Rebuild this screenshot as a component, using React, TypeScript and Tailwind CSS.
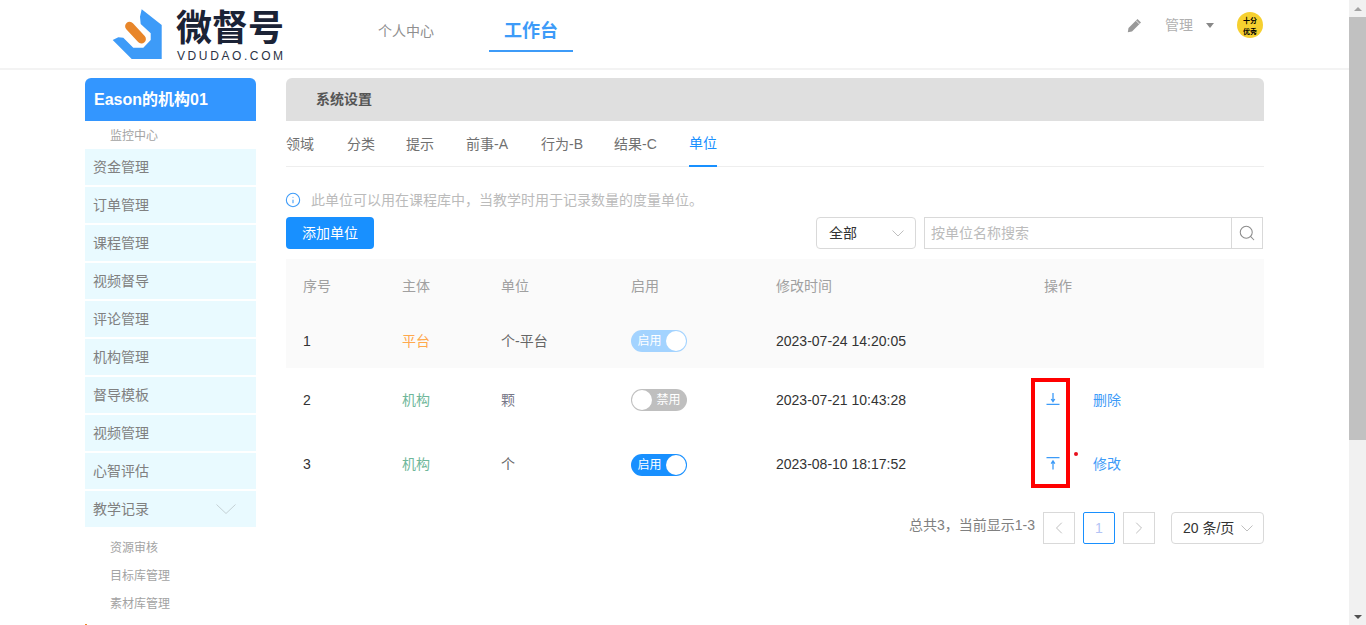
import { ChevronLeft, ChevronRight, Info, Search } from "lucide-react";

const font = { fontFamily: '"Liberation Sans", "Noto Sans CJK SC", sans-serif' };

const menu = ["资金管理", "订单管理", "课程管理", "视频督导", "评论管理", "机构管理", "督导模板", "视频管理", "心智评估"];
const subs = ["资源审核", "目标库管理", "素材库管理"];
const tabs = ["领域", "分类", "提示", "前事-A", "行为-B", "结果-C", "单位"];
const tabW = ["w-[61px]", "w-[59px]", "w-[60px]", "w-[75px]", "w-[73px]", "w-[75px]", "w-[28px]"];
const gridCols = "grid grid-cols-[99px_99px_130px_145px_268px_1fr] items-center pl-[17px]";

function Logo() {
  return (
    <svg width="52" height="52" viewBox="0 0 52 52" className="shrink-0">
      <path
        d="M29.7 1.3 L49.7 17 L49.7 51 L19.7 51 L0.7 32 L6.3 29.3 L11.3 29.7 L21.3 39.7 L31.3 39.7 L38.7 32 L38.7 25.3 L28.7 16 L28 8.7 Z"
        fill="#3d9bf8"
        strokeLinejoin="round"
      />
      <path d="M17.6 18.2 L29.4 31" stroke="#e8862a" strokeWidth="9" strokeLinecap="round" />
    </svg>
  );
}

function Down() {
  return (
    <svg width="12" height="7" viewBox="0 0 12 7" className="shrink-0">
      <path d="M0.5 0.5 L6 6 L11.5 0.5" stroke="#bfbfbf" fill="none" />
    </svg>
  );
}

function Switch({ on, label, faded, shift }: { on: boolean; label: string; faded?: boolean; shift?: boolean }) {
  const bg = on ? (faded ? "bg-[#a3d3ff]" : "bg-[#1890ff]") : "bg-[#bfbfbf]";
  return (
    <div className={`flex h-[22px] w-[56px] items-center rounded-full px-[1px] ${bg} ${on ? "flex-row" : "flex-row-reverse"} ${shift ? "mt-[2px]" : ""}`}>
      <span className={`flex-1 text-center text-[12px] leading-none text-white ${on ? "pl-[1px]" : "pr-[1px]"}`}>{label}</span>
      <span className="h-[20px] w-[20px] rounded-full bg-white" />
    </div>
  );
}

function ArrowIcon({ up }: { up?: boolean }) {
  return (
    <svg width="14" height="14" viewBox="0 0 14 14" className="block">
      {up ? (
        <path d="M0.5 0.6 H13.5 M7 4.2 V12.4 M5.2 6.6 L7 4 L8.8 6.6" stroke="#3d9bf8" strokeWidth="1.3" fill="none" />
      ) : (
        <path d="M0.5 11.4 H13.5 M7 0 V8.4 M5.2 6 L7 8.6 L8.8 6" stroke="#3d9bf8" strokeWidth="1.3" fill="none" />
      )}
    </svg>
  );
}

export default function App() {
  return (
    <div style={font} className="flex h-[625px] w-[1366px] overflow-hidden bg-white text-[14px]">
      <div className="w-[1349px] shrink-0">
        <header className="flex h-[70px] items-start border-b-2 border-[#f3f3f3]">
          <div className="ml-[112px] mt-[8px] flex w-[266px]">
            <Logo />
            <div className="ml-[13px] flex flex-col">
              <span className="ml-[-1px] mt-[0px] text-[36px] font-bold leading-[42px] text-[#1b2336]">微督号</span>
              <span className="mt-[-1px] text-[12px] leading-[14px] tracking-[2.6px] text-[#2b3245]">VDUDAO.COM</span>
            </div>
          </div>
          <span className="mt-[22px] text-[14px] leading-[18px] text-[#8f8f8f]">个人中心</span>
          <div className="ml-[55px] flex h-[52px] w-[84px] flex-col items-center border-b-2 border-[#3d9bf8] pt-[19px]">
            <span className="text-[18px] font-bold leading-[24px] text-[#3d9bf8]">工作台</span>
          </div>
          <div className="ml-auto mr-[86px] mt-[12px] flex h-[26px] items-center">
            <svg width="15" height="15" viewBox="0 0 15 15" className="mr-[23px]">
              <path d="M10.5 1 L14 4.5 L5 13.5 L0.8 14.2 L1.5 10 Z" fill="#999" />
              <path d="M9 2.6 L12.4 6" stroke="#fff" strokeWidth="0.8" />
            </svg>
            <span className="text-[14px] text-[#b0b0b0]">管理</span>
            <span className="ml-[13px] mr-[23px] h-0 w-0 border-x-[4.5px] border-t-[5px] border-x-transparent border-t-[#888]" />
            <div className="flex h-[26px] w-[26px] flex-col items-center justify-center gap-[2px] rounded-full bg-[#f6d02f] pt-[2px] text-[7px] font-bold leading-[9px] text-black">
              <span>十分</span>
              <span>优秀</span>
            </div>
          </div>
        </header>

        <div className="ml-[85px] mt-[8px] flex gap-[30px]">
          <aside className="w-[171px] shrink-0">
            <div className="flex h-[43px] items-center rounded-t-[6px] bg-[#3396ff] pl-[9px] text-[16px] font-bold text-white">Eason的机构01</div>
            <div className="flex h-[28px] items-center pl-[25px] pt-[2px] text-[12px] text-[#a3a3a3]">监控中心</div>
            {menu.map((m) => (
              <div key={m} className="mb-[2px] flex h-[36px] items-center bg-[#e9faff] pl-[8px] text-[14px] text-[#808080]">{m}</div>
            ))}
            <div className="flex h-[36px] items-center justify-between bg-[#e9faff] pl-[8px] pr-[20px] text-[14px] text-[#808080]">
              <span>教学记录</span>
              <svg width="20" height="10" viewBox="0 0 20 10"><path d="M0.5 0.5 L10 9.5 L19.5 0.5" stroke="#c4d0d4" fill="none" /></svg>
            </div>
            <div className="pt-[7px]">
              {subs.map((s) => (
                <div key={s} className="flex h-[28px] items-center pl-[25px] text-[12px] text-[#a3a3a3]">{s}</div>
              ))}
            </div>
            <div className="mt-[6px] h-[1px] w-[2px] bg-[#f08a24]" />
          </aside>

          <main className="w-[978px] shrink-0">
            <div className="flex h-[43px] items-center rounded-t-[6px] bg-[#dfdfdf] pb-[1px] pl-[30px] text-[14px] font-bold text-[#555]">系统设置</div>
            <div className="flex h-[46px] border-b border-[#eeeeee]">
              {tabs.map((t, i) => (
                <div key={t} className={`${tabW[i]} shrink-0`}>
                  <div className={`flex h-[46px] items-center whitespace-nowrap ${i === 6 ? "border-b-2 border-[#1890ff] text-[#1890ff]" : "text-[#707070]"}`}>{t}</div>
                </div>
              ))}
            </div>
            <div className="mt-[23px] flex h-[20px] items-center text-[#bbbbbb]">
              <Info size={16} stroke="#3d9bf8" strokeWidth={1.6} className="ml-[-1px] mr-[10px]" />
              <span>此单位可以用在课程库中，当教学时用于记录数量的度量单位。</span>
            </div>
            <div className="mt-[7px] flex h-[32px] items-center">
              <button className="h-[32px] w-[88px] rounded-[4px] bg-[#1890ff] text-[14px] text-white">添加单位</button>
              <div className="ml-auto flex h-[32px] w-[100px] items-center justify-between rounded-[4px] border border-[#d9d9d9] pl-[12px] pr-[11px] text-[#333]">
                <span>全部</span>
                <Down />
              </div>
              <div className="ml-[8px] mr-[1px] flex h-[32px] w-[339px] items-stretch border border-[#d9d9d9]">
                <span className="flex flex-1 items-center pl-[6px] text-[#bbbbbb]">按单位名称搜索</span>
                <span className="flex w-[31px] items-center justify-center border-l border-[#d9d9d9]">
                  <Search size={18} stroke="#8c8c8c" strokeWidth={1.4} />
                </span>
              </div>
            </div>

            <div className="mt-[10px]">
              <div className="bg-[#fafafa]">
                <div className={`${gridCols} h-[55px] text-[14px] text-[#a0a0a0]`}>
                  <span>序号</span><span>主体</span><span>单位</span><span>启用</span><span>修改时间</span><span>操作</span>
                </div>
                <div className={`${gridCols} h-[54px] text-[#666]`}>
                  <span className="text-[#333]">1</span>
                  <span className="text-[#ffa94d]">平台</span>
                  <span>个-平台</span>
                  <Switch on faded label="启用" />
                  <span className="text-[#333]">2023-07-24 14:20:05</span>
                  <span />
                </div>
              </div>
              <div className={`${gridCols} h-[64px] text-[#666]`}>
                <span className="text-[#333]">2</span>
                <span className="text-[#6fb79a]">机构</span>
                <span className="text-[#778]">颗</span>
                <Switch on={false} label="禁用" />
                <span className="text-[#333]">2023-07-21 10:43:28</span>
                <div className="relative flex items-center text-[14px] text-[#3d9bf8]">
                  <span className="ml-[2px] w-[47px]"><ArrowIcon /></span>
                  <span>删除</span>
                  <div className="pointer-events-none absolute left-[-13px] top-[-12px] h-[110px] w-[39px] border-[4px] border-[#ff0000]" />
                  <div className="absolute left-[30px] top-[62px] h-[4px] w-[4px] rounded-full bg-[#e8101c]" />
                </div>
              </div>
              <div className={`${gridCols} h-[64px] text-[#666]`}>
                <span className="text-[#333]">3</span>
                <span className="text-[#6fb79a]">机构</span>
                <span>个</span>
                <Switch on shift label="启用" />
                <span className="text-[#333]">2023-08-10 18:17:52</span>
                <div className="flex items-center text-[14px] text-[#3d9bf8]">
                  <span className="ml-[2px] w-[47px]"><ArrowIcon up /></span>
                  <span>修改</span>
                </div>
              </div>
            </div>

            <div className="mt-[16px] flex h-[32px] items-center justify-end text-[14px]">
              <span className="mr-[8px] mt-[-6px] text-[#808080]">总共3，当前显示1-3</span>
              <span className="flex h-[32px] w-[32px] items-center justify-center border border-[#d9d9d9]"><ChevronLeft size={20} strokeWidth={1.2} stroke="#bfbfbf" /></span>
              <span className="ml-[8px] flex h-[32px] w-[32px] items-center justify-center rounded-[2px] border border-[#1890ff] text-[#b4c4f5]">1</span>
              <span className="ml-[8px] flex h-[32px] w-[32px] items-center justify-center border border-[#d9d9d9]"><ChevronRight size={20} strokeWidth={1.2} stroke="#bfbfbf" /></span>
              <span className="ml-[16px] flex h-[32px] w-[93px] items-center justify-between rounded-[4px] border border-[#d9d9d9] pl-[11px] pr-[10px] text-[#333]">
                <span className="whitespace-nowrap">20 条/页</span>
                <Down />
              </span>
            </div>
          </main>
        </div>
      </div>

      <div className="flex h-[625px] w-[17px] shrink-0 flex-col items-center bg-[#f1f1f1]">
        <div className="flex h-[17px] items-center">
          <span className="h-0 w-0 border-x-[4px] border-b-[4px] border-x-transparent border-b-[#a3a3a3]" />
        </div>
        <div className="h-[423px] w-full bg-[#c1c1c1]" />
        <div className="mt-auto flex h-[17px] items-center">
          <span className="h-0 w-0 border-x-[4px] border-t-[4px] border-x-transparent border-t-[#505050]" />
        </div>
      </div>
    </div>
  );
}
